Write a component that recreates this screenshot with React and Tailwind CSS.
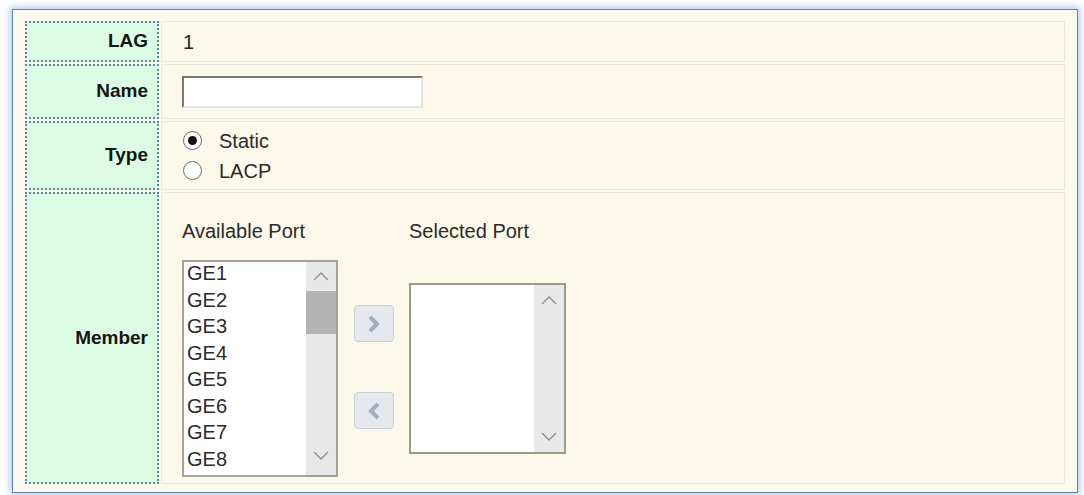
const PORTS = ['GE1', 'GE2', 'GE3', 'GE4', 'GE5', 'GE6', 'GE7', 'GE8'];

function Chevron({ up }) {
  return (
    <svg width="16" height="9" viewBox="0 0 16 9">
      <polyline
        points={up ? '1,8 8,1 15,8' : '1,1 8,8 15,1'}
        fill="none"
        stroke="#8e8e8e"
        strokeWidth="1.3"
      />
    </svg>
  );
}

function MoveButton({ dir }) {
  return (
    <button className="w-[40px] h-[37px] flex items-center justify-center rounded-[4px] border border-[#c9ced3] bg-[#e5e9ed]">
      <svg width="14" height="18" viewBox="0 0 14 18">
        <polyline
          points={dir === 'right' ? '3,2 10,9 3,16' : '11,2 4,9 11,16'}
          fill="none"
          stroke="#a0aebd"
          strokeWidth="4"
        />
      </svg>
    </button>
  );
}

function Label({ children }) {
  return (
    <div className="w-[134px] shrink-0 flex items-center justify-end pr-[9px] bg-[#dcfde3] border-2 border-dotted border-[#5a8699] text-[19px] font-bold text-[#151515]">
      {children}
    </div>
  );
}

function Radio({ checked, label }) {
  return (
    <label className="flex items-center h-[30px]">
      <span className="w-[19px] h-[19px] rounded-full border-[1.5px] border-[#6c6c6c] bg-white flex items-center justify-center">
        {checked && <span className="w-[9px] h-[9px] rounded-full bg-[#111]" />}
      </span>
      <span className="ml-[17px] text-[20px] text-[#2a2a2a]">{label}</span>
    </label>
  );
}

export default function App() {
  return (
    <div className="w-[1084px] h-[495px] bg-white overflow-hidden" style={{ fontFamily: '"Liberation Sans", Arial, sans-serif' }}>
      <div className="ml-[12px] mt-[9px] w-[1066px] h-[484px] border border-[#5f82a6] bg-[#fcfaee] shadow-[0_0_7px_2px_rgba(110,165,230,0.55)] pt-[11px] px-[12px]">
        <div className="flex flex-col gap-[2px]">
          {/* LAG */}
          <div className="flex gap-[2px] h-[41px]">
            <Label>LAG</Label>
            <div className="flex-1 flex items-center pl-[21px] bg-[#fcf9ea] border border-[#eee7d6] text-[20px] text-[#222]">1</div>
          </div>

          {/* Name */}
          <div className="flex gap-[2px] h-[55px]">
            <Label>Name</Label>
            <div className="flex-1 flex items-center pl-[20px] bg-[#fcf9ea] border border-[#eee7d6]">
              <input className="w-[241px] h-[32px] bg-white border-2 border-t-[#777] border-l-[#777] border-r-[#e4e4e4] border-b-[#e4e4e4] outline-none px-1 text-[17px]" />
            </div>
          </div>

          {/* Type */}
          <div className="flex gap-[2px] h-[69px]">
            <Label>Type</Label>
            <div className="flex-1 flex flex-col justify-center pl-[21px] bg-[#fcf9ea] border border-[#eee7d6]">
              <Radio checked label="Static" />
              <Radio label="LACP" />
            </div>
          </div>

          {/* Member */}
          <div className="flex gap-[2px] h-[292px]">
            <Label>Member</Label>
            <div className="flex-1 flex items-start pl-[20px] pt-[27px] bg-[#fcf9ea] border border-[#eee7d6] text-[#2a2a2a]">
              <div className="flex flex-col">
                <div className="h-[22px] leading-[22px] text-[20px]">Available Port</div>
                <div className="mt-[18px] w-[156px] h-[217px] flex border-2 border-[#a3a39c] bg-white overflow-hidden">
                  <div className="flex-1 pl-[3px] text-[20px] leading-[26.5px] -mt-[2px]">
                    {PORTS.map((p) => (
                      <div key={p}>{p}</div>
                    ))}
                  </div>
                  <div className="w-[30px] flex flex-col bg-[#e8e8e8]">
                    <div className="h-[29px] flex items-center justify-center">
                      <Chevron up />
                    </div>
                    <div className="h-[43px] bg-[#b3b3b3]" />
                    <div className="flex-1" />
                    <div className="h-[26px] flex items-start justify-center pt-[2px]">
                      <Chevron />
                    </div>
                  </div>
                </div>
              </div>

              <div className="ml-[16px] mt-[85px] flex flex-col gap-[50px]">
                <MoveButton dir="right" />
                <MoveButton dir="left" />
              </div>

              <div className="ml-[15px] flex flex-col">
                <div className="h-[22px] leading-[22px] text-[20px]">Selected Port</div>
                <div className="mt-[41px] w-[157px] h-[171px] flex border-2 border-[#9a9a91] bg-white">
                  <div className="flex-1" />
                  <div className="w-[30px] flex flex-col justify-between bg-[#e9e9e9] py-[11px] items-center">
                    <Chevron up />
                    <Chevron />
                  </div>
                </div>
              </div>
            </div>
          </div>
        </div>
      </div>
    </div>
  );
}
